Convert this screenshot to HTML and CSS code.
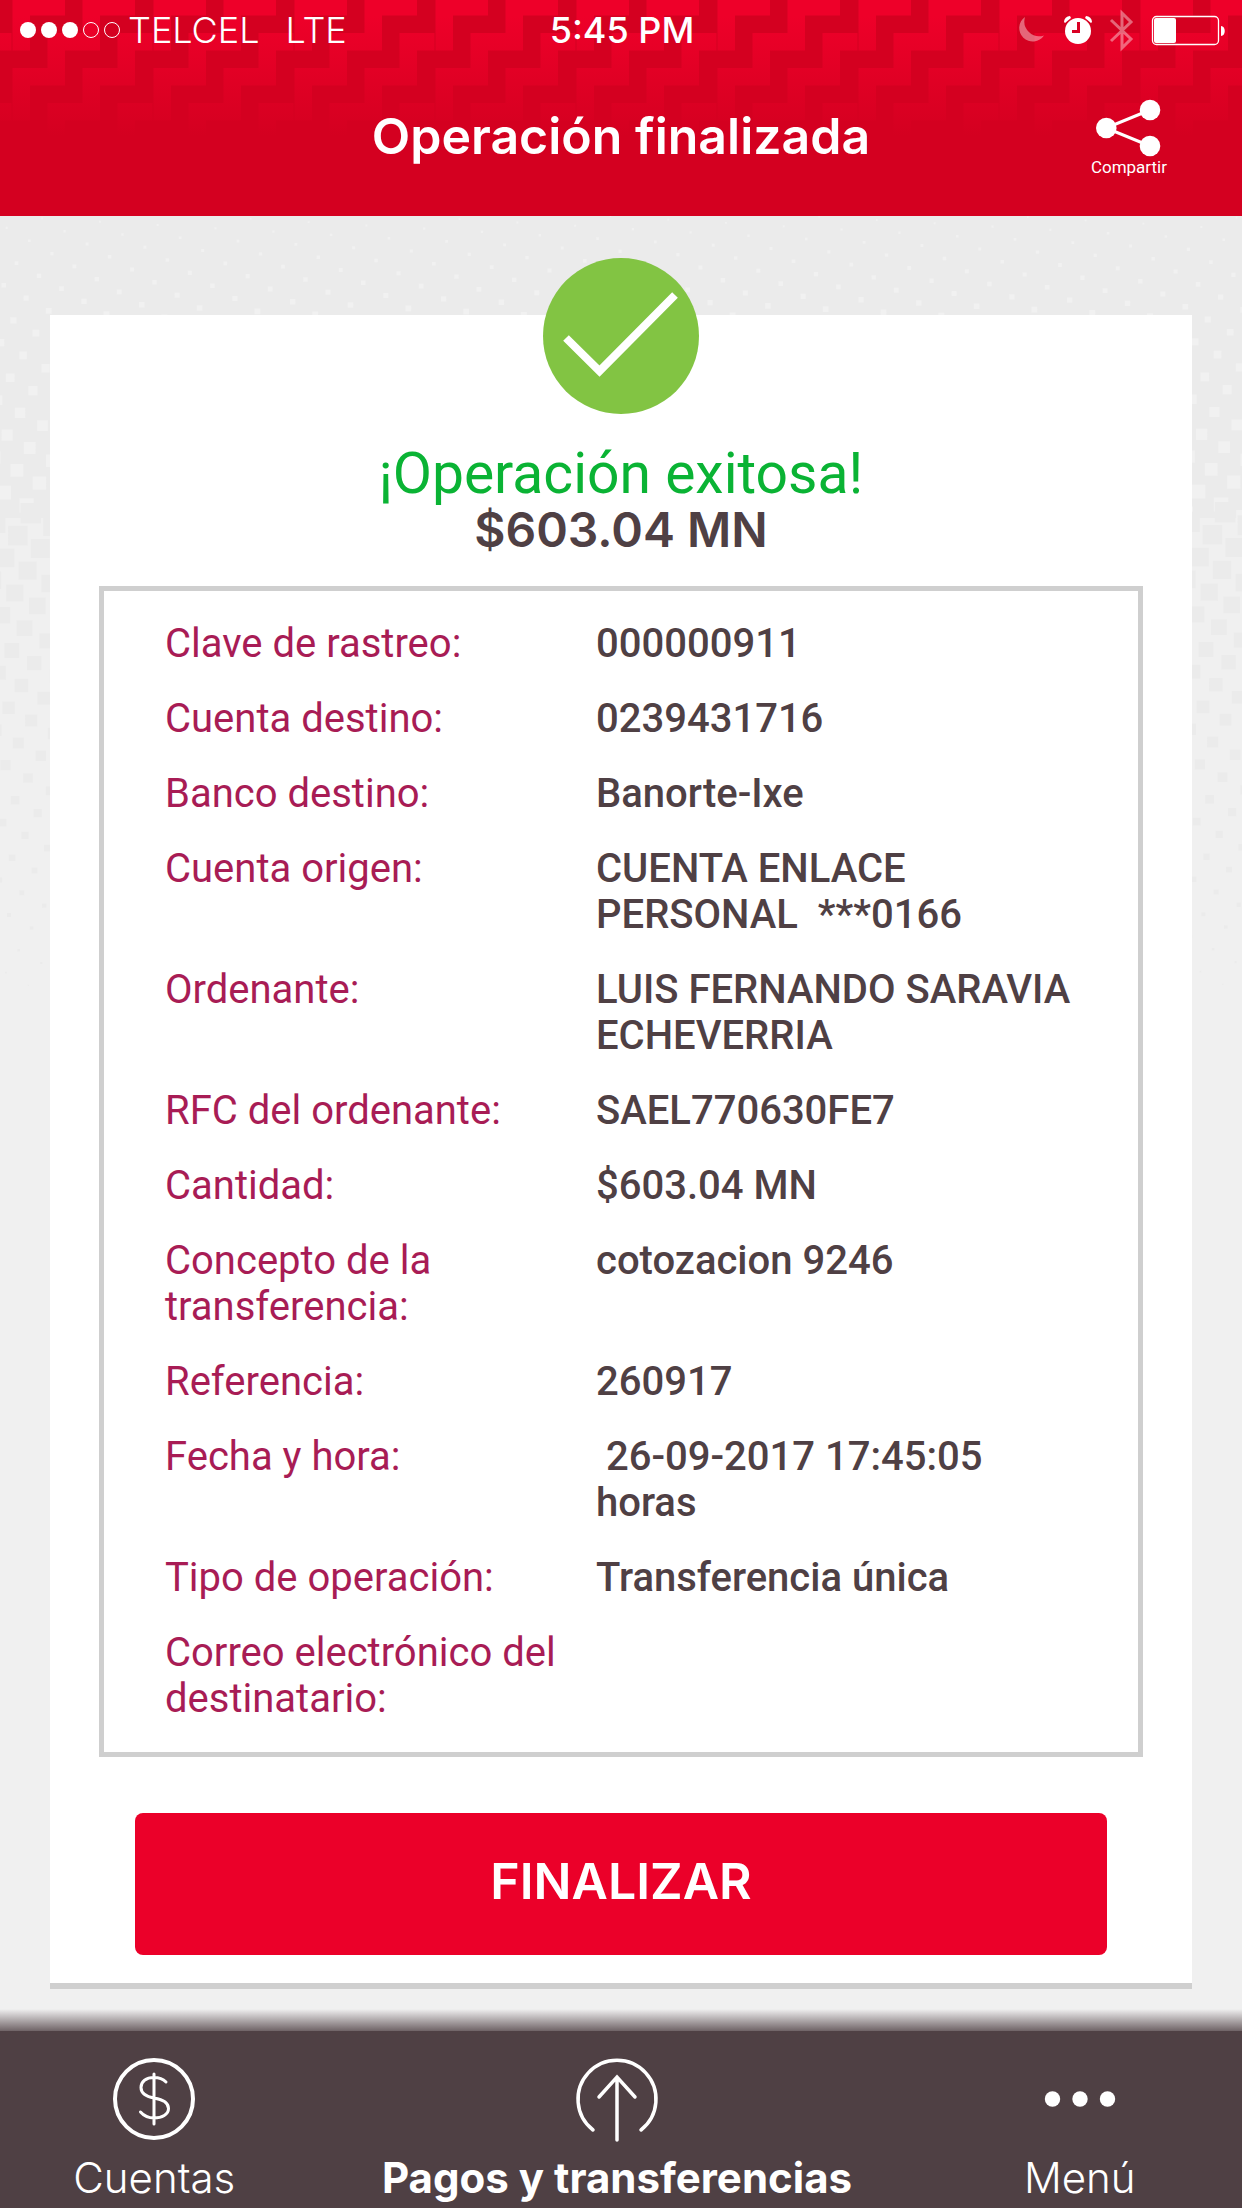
FILE: index.html
```html
<!DOCTYPE html>
<html lang="es">
<head>
<meta charset="utf-8">
<meta name="viewport" content="width=device-width, initial-scale=1">
<title>Operación finalizada</title>
<link rel="stylesheet" href="styles.css">
</head>
<body>
<header class="header">
  <div class="status">
    <div class="status-left">
      <svg width="102" height="18" viewBox="0 0 102 18" aria-hidden="true">
        <g fill="#fff"><circle cx="10" cy="9" r="8"/><circle cx="31" cy="9" r="8"/><circle cx="52" cy="9" r="8"/></g>
        <g fill="none" stroke="#fff"><circle cx="73" cy="9" r="7.5"/><circle cx="94" cy="9" r="7.5"/></g>
      </svg>
      <span class="carrier">TELCEL</span>
      <span class="network">LTE</span>
    </div>
    <time class="clock">5:45 PM</time>
    <svg class="status-icons" width="210" height="44" viewBox="0 0 210 44" aria-hidden="true">
      <path d="M9 9A13.500 13.500 0 1 0 28 27.500A15 15 0 0 1 9 9Z" fill="#fff" opacity=".4"/>
      <g fill="#fff"><circle cx="62" cy="23" r="13"/><path d="M48 14a6 6 0 0 1 6-6l1 2-6 5zM76 14a6 6 0 0 0-6-6l-1 2 6 5z"/></g>
      <path d="M62.500 14v9.500H56" fill="none" stroke="#d90024" stroke-width="3"/>
      <path d="M95 12l20 19-9 9V5l9 9-20 19" fill="none" stroke="#fff" stroke-width="3" opacity=".4"/>
      <rect x="136.500" y="8.500" width="66" height="28" rx="4" fill="none" stroke="#fff" stroke-width="1.300"/>
      <rect x="138" y="10" width="22" height="25" rx="2" fill="#fff"/>
      <path d="M205 18c5 0 5 10 0 10z" fill="#fff"/>
    </svg>
  </div>
  <div class="titlebar">
    <h1 class="title">Operación finalizada</h1>
    <button class="share" type="button">
      <svg width="66" height="58" viewBox="0 0 66 58" aria-hidden="true">
        <path d="M54 11L10 29l44 18" fill="none" stroke="#fff" stroke-width="3"/>
        <g fill="#fff"><circle cx="54" cy="11" r="10.300"/><circle cx="10.300" cy="29" r="10.300"/><circle cx="54" cy="47" r="10.300"/></g>
      </svg>
      <span>Compartir</span>
    </button>
  </div>
</header>

<main class="main">
  <svg class="halftone" id="halftone" aria-hidden="true"></svg>
  <section class="card">
    <svg class="check" width="156" height="156" viewBox="0 0 156 156" aria-hidden="true">
      <circle cx="78" cy="78" r="78" fill="#82c443"/>
      <path d="M23 80l33.500 33L132 37" fill="none" stroke="#fff" stroke-width="8"/>
    </svg>
    <h2 class="success">¡Operación exitosa!</h2>
    <p class="amount">$603.04 MN</p>
    <dl class="details">
      <div class="row"><dt>Clave de rastreo:</dt><dd>000000911</dd></div>
      <div class="row"><dt>Cuenta destino:</dt><dd>0239431716</dd></div>
      <div class="row"><dt>Banco destino:</dt><dd>Banorte-Ixe</dd></div>
      <div class="row"><dt>Cuenta origen:</dt><dd>CUENTA ENLACE PERSONAL  ***0166</dd></div>
      <div class="row"><dt>Ordenante:</dt><dd>LUIS FERNANDO SARAVIA ECHEVERRIA</dd></div>
      <div class="row"><dt>RFC del ordenante:</dt><dd>SAEL770630FE7</dd></div>
      <div class="row"><dt>Cantidad:</dt><dd>$603.04 MN</dd></div>
      <div class="row"><dt>Concepto de la transferencia:</dt><dd>cotozacion 9246</dd></div>
      <div class="row"><dt>Referencia:</dt><dd>260917</dd></div>
      <div class="row"><dt>Fecha y hora:</dt><dd> 26-09-2017 17:45:05 horas</dd></div>
      <div class="row"><dt>Tipo de operación:</dt><dd>Transferencia única</dd></div>
      <div class="row"><dt>Correo electrónico del destinatario:</dt><dd></dd></div>
    </dl>
    <button class="finish" type="button">FINALIZAR</button>
  </section>
</main>

<nav class="tabs">
  <a class="tab" href="#cuentas">
    <svg width="86" height="86" viewBox="0 0 86 86" fill="none" stroke="#fff" stroke-linecap="round" aria-hidden="true">
      <circle cx="43" cy="43" r="39" stroke-width="4"/>
      <path d="M43 18v50M55 26c-3-3-7-4.500-12-4.500-8 0-13 4-13 10 0 6 5 9 13 10.500 9 1.500 14.500 4.500 14.500 10.500S51 62 43 62c-6 0-10-2-13.500-6" stroke-width="3"/>
    </svg>
    <span>Cuentas</span>
  </a>
  <a class="tab tab-active" href="#pagos" aria-current="page">
    <svg width="86" height="86" viewBox="0 0 86 86" fill="none" stroke="#fff" stroke-linecap="round" aria-hidden="true">
      <path d="M19 74A39 39 0 1 1 67 74" stroke-width="3.500"/>
      <path d="M43 84V21M25 41l18-20 18 20" stroke-width="3.500"/>
    </svg>
    <span>Pagos y transferencias</span>
  </a>
  <a class="tab" href="#menu">
    <svg width="86" height="86" viewBox="0 0 86 86" fill="#fff" aria-hidden="true">
      <circle cx="15.500" cy="43" r="7.700"/><circle cx="43" cy="43" r="7.700"/><circle cx="70.500" cy="43" r="7.700"/>
    </svg>
    <span>Menú</span>
  </a>
</nav>
<script src="halftone.js"></script>
</body>
</html>
```

FILE: halftone.js
```js
// Squares on a tilted grid: light ones grow down to FLIP, then dark ones shrink away.
(function () {
  var svg = document.getElementById('halftone');
  var FLIP = 302;
  function lattice(ox, oy, size, fill, from, to) {
    var width = svg.clientWidth, path = '';
    for (var i = -60; i < 90; i++) {
      for (var j = -60; j < 90; j++) {
        var x = ox + i * 22.5 - j * 12.8;
        var y = oy + i * 12.8 + j * 22.3;
        if (x < -12 || x > width + 12 || y < from || y > to) continue;
        var s = size(y);
        if (s <= 0.5) continue;
        path += 'M' + (x - s / 2).toFixed(1) + ' ' + (y - s / 2).toFixed(1) + 'h' + s.toFixed(1) + 'v' + s.toFixed(1) + 'h-' + s.toFixed(1) + 'z';
      }
    }
    return '<path fill="' + fill + '" d="' + path + '"/>';
  }
  function draw() {
    svg.innerHTML =
      '<rect width="100%" height="' + FLIP + '" fill="#ebebeb"/>' +
      lattice(29.3, 24.7, function (y) { return 1.6 + y * 0.044; }, '#f1f1f1', 0, FLIP) +
      lattice(30.7, 297.3, function (y) { return 20.5 - (y - 297) * 0.041; }, '#ebebeb', FLIP - 15, 800);
  }
  draw();
  window.addEventListener('resize', draw);
})();
```

FILE: styles.css
```css
* { box-sizing: border-box; margin: 0; padding: 0; }

body {
  min-height: 100vh;
  display: flex;
  flex-direction: column;
  background: #f0f0f0;
  font-family: Roboto, "Liberation Sans", sans-serif;
  color: #4f4044;
}

button { border: 0; background: none; color: inherit; cursor: pointer; }
svg { display: block; flex: none; }

.header {
  color: #fff;
  background-color: #d40020;
  background-image:
    linear-gradient(rgba(212, 0, 32, 0) 16px, #d40020 136px),
    url("data:image/svg+xml,%3Csvg xmlns='http://www.w3.org/2000/svg' viewBox='0 0 8 4'%3E%3Cpath fill='%23ee0029' d='M0 0h3v1H0zM4 0h3v1H4zM0 1h1v1H0zM4 1h1v1H4zM2 2h3v1H2zM6 2h2v1H6zM0 2h1v1H0zM2 3h1v1H2zM6 3h1v1H6z'/%3E%3C/svg%3E");
  background-size: auto, 141px 70px;
  background-position: 0 0, 12px -2px;
}

.status {
  display: grid;
  grid-template-columns: 1fr auto 1fr;
  align-items: center;
  height: 60px;
  padding: 0 16px 0 18px;
  font-family: Inter, "Liberation Sans", sans-serif;
  font-size: 36px;
  line-height: 44px;
}
.status-left { display: flex; align-items: center; font-weight: 300; }
.carrier { margin-left: 8px; }
.network { margin-left: 26px; }
.clock { font-weight: 500; }
.status-icons { justify-self: end; }

.titlebar {
  display: grid;
  grid-template-columns: 1fr auto 1fr;
  align-items: center;
  height: 156px;
  padding: 0 75px;
}
.title {
  grid-column: 2;
  padding-bottom: 4px;
  font: 600 50px/56px Inter, "Liberation Sans", sans-serif;
}
.share {
  justify-self: end;
  display: flex;
  flex-direction: column;
  align-items: center;
  font: 17px/20px Roboto, sans-serif;
}

.main {
  position: relative;
  flex: 1;
  padding: 99px 50px 42px;
}
.halftone {
  position: absolute;
  inset: 0;
  width: 100%;
  height: 100%;
}
.card {
  position: relative;
  display: flex;
  flex-direction: column;
  align-items: center;
  padding: 0 49px 28px;
  background: #fff;
  border-bottom: 6px solid #cfcfcf;
}
.check { margin-top: -57px; }
.success {
  margin-top: 32px;
  font-size: 57px;
  font-weight: 400;
  line-height: 56px;
  color: #0ab334;
}
.amount { font: 600 48px/56px Inter, "Liberation Sans", sans-serif; }

.details {
  align-self: stretch;
  display: grid;
  gap: 29px;
  margin-top: 28px;
  padding: 30px 61px;
  border: 5px solid #cfcfcf;
  font-size: 40px;
  line-height: 46px;
}
.row { display: grid; grid-template-columns: 400px 1fr; column-gap: 31px; }
.row dt { color: #a81c55; }
.row dd { font-weight: 500; white-space: pre-wrap; }

.finish {
  align-self: stretch;
  height: 142px;
  margin: 56px 36px 0;
  padding-bottom: 6px;
  border-radius: 8px;
  background: #eb0029;
  color: #fff;
  font: 600 50px/56px Inter, "Liberation Sans", sans-serif;
}

.tabs {
  position: relative;
  display: grid;
  grid-template-columns: 1fr 2fr 1fr;
  height: 177px;
  padding: 25px 8px 0 0;
  background: #4f4044;
}
.tabs::before {
  content: "";
  position: absolute;
  inset: -22px 0 auto;
  height: 22px;
  background: linear-gradient(rgba(79, 64, 68, 0), rgba(79, 64, 68, .8));
}
.tab {
  display: flex;
  flex-direction: column;
  align-items: center;
  gap: 12px;
  color: #fff;
  text-decoration: none;
  font: 300 42px/48px Inter, "Liberation Sans", sans-serif;
}
.tab-active { font-weight: 700; }
```
